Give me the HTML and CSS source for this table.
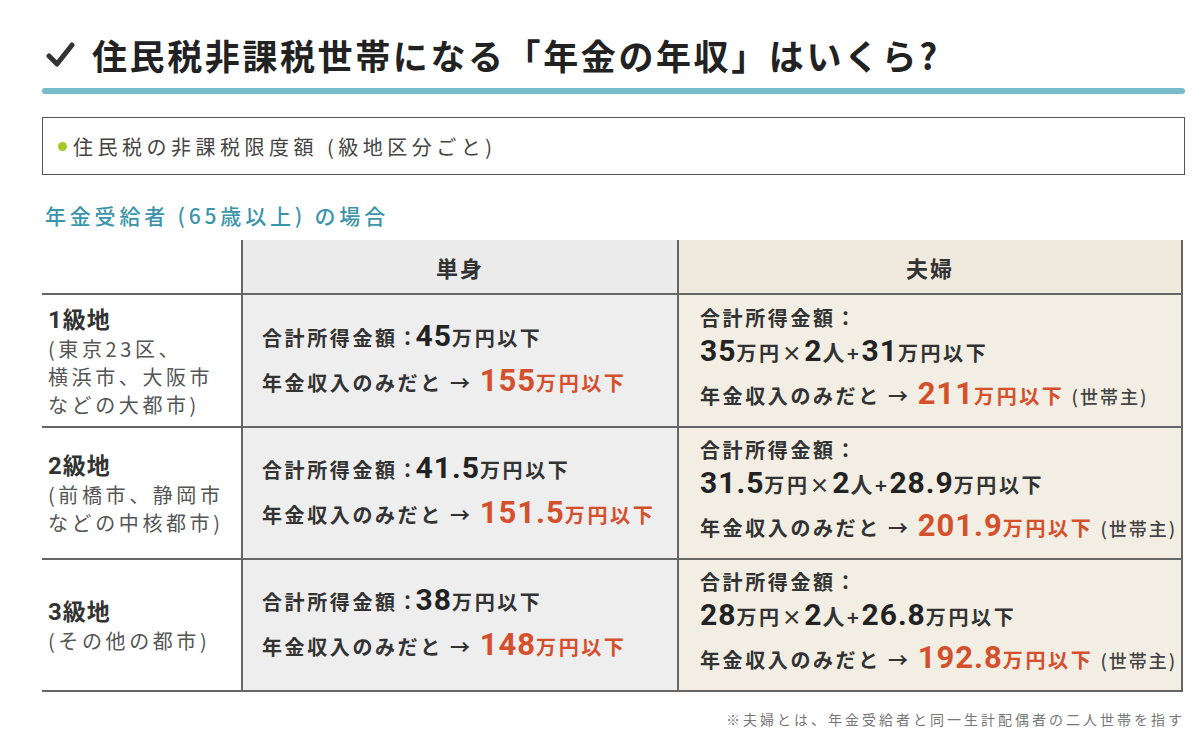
FILE: index.html
```html
<!DOCTYPE html>
<html lang="ja">
<head>
<meta charset="utf-8">
<title>住民税非課税世帯になる「年金の年収」はいくら?</title>
<link rel="stylesheet" href="styles.css">
</head>
<body>
<div class="page">
  <h1 class="title">
    <svg class="check" viewBox="0 0 30 30" width="30" height="30" aria-hidden="true">
      <path d="M4 16 L12 24 L27 5" fill="none" stroke="#333" stroke-width="5" stroke-linecap="round" stroke-linejoin="round"/>
    </svg>
    <span>住民税非課税世帯になる「年金の年収」はいくら?</span>
  </h1>
  <div class="rule"></div>

  <div class="box"><span class="dot"></span><span>住民税の非課税限度額 (級地区分ごと)</span></div>

  <h2 class="sub">年金受給者 (65歳以上) の場合</h2>

  <div class="grid">
    <div class="cell c1 head"></div>
    <div class="cell c2 head">単身</div>
    <div class="cell c3 head">夫婦</div>

    <div class="cell c1 area">
      <div class="rank"><span class="num">1</span>級地</div>
      <div class="cities">(東京23区、</div>
      <div class="cities">横浜市、大阪市</div>
      <div class="cities">などの大都市)</div>
    </div>
    <div class="cell c2 body">
      <div class="l1">合計所得金額<span class="colon">：</span><span class="num big">45</span>万円以下</div>
      <div class="l2">年金収入のみだと → <span class="red"><span class="num rbig">155</span>万円以下</span></div>
    </div>
    <div class="cell c3 body">
      <div class="m1">合計所得金額：</div>
      <div class="m2"><span class="num big">35</span>万円×<span class="num big">2</span><span class="nin">人</span>+<span class="num big">31</span>万円以下</div>
      <div class="m3">年金収入のみだと → <span class="red"><span class="num rbig">211</span>万円以下</span> <span class="hh">(世帯主)</span></div>
    </div>

    <div class="cell c1 area">
      <div class="rank"><span class="num">2</span>級地</div>
      <div class="cities">(前橋市、静岡市</div>
      <div class="cities">などの中核都市)</div>
    </div>
    <div class="cell c2 body">
      <div class="l1">合計所得金額<span class="colon">：</span><span class="num big">41.5</span>万円以下</div>
      <div class="l2">年金収入のみだと → <span class="red"><span class="num rbig">151.5</span>万円以下</span></div>
    </div>
    <div class="cell c3 body">
      <div class="m1">合計所得金額：</div>
      <div class="m2"><span class="num big">31.5</span>万円×<span class="num big">2</span><span class="nin">人</span>+<span class="num big">28.9</span>万円以下</div>
      <div class="m3">年金収入のみだと → <span class="red"><span class="num rbig">201.9</span>万円以下</span> <span class="hh">(世帯主)</span></div>
    </div>

    <div class="cell c1 area">
      <div class="rank"><span class="num">3</span>級地</div>
      <div class="cities">(その他の都市)</div>
    </div>
    <div class="cell c2 body">
      <div class="l1">合計所得金額<span class="colon">：</span><span class="num big">38</span>万円以下</div>
      <div class="l2">年金収入のみだと → <span class="red"><span class="num rbig">148</span>万円以下</span></div>
    </div>
    <div class="cell c3 body">
      <div class="m1">合計所得金額：</div>
      <div class="m2"><span class="num big">28</span>万円×<span class="num big">2</span><span class="nin">人</span>+<span class="num big">26.8</span>万円以下</div>
      <div class="m3">年金収入のみだと → <span class="red"><span class="num rbig">192.8</span>万円以下</span> <span class="hh">(世帯主)</span></div>
    </div>
  </div>

  <p class="note">※夫婦とは、年金受給者と同一生計配偶者の二人世帯を指す</p>
</div>
</body>
</html>
```

FILE: styles.css
```css
* { box-sizing: border-box; }

html, body {
  margin: 0;
  padding: 0;
  background: #ffffff;
}

body {
  font-family: "Noto Sans CJK JP", "Noto Sans", sans-serif;
  color: #333;
}

.page {
  width: 1200px;
  padding: 35px 15px 0 42px;
}

.title {
  display: flex;
  align-items: center;
  gap: 17px;
  margin: 0;
  height: 40px;
  font-size: 35px;
  line-height: 40px;
  font-weight: 700;
  letter-spacing: 2.6px;
  color: #222;
  white-space: nowrap;
}

.check {
  flex: none;
  margin-left: 3px;
}

.rule {
  margin-top: 13px;
  height: 6px;
  border-radius: 3px;
  background: #76bccb;
  width: 1143px;
}

.box {
  margin-top: 23px;
  width: 1143px;
  height: 58px;
  border: 1.5px solid #555;
  display: flex;
  align-items: center;
  padding-left: 15px;
  font-size: 20px;
  letter-spacing: 4.5px;
  color: #444;
}

.dot {
  width: 9px;
  height: 9px;
  border-radius: 50%;
  background: #a7c928;
  margin-right: 6px;
}

.sub {
  margin: 25px 0 0 3px;
  height: 30px;
  line-height: 30px;
  font-size: 21px;
  font-weight: 500;
  letter-spacing: 3.8px;
  color: #3b94aa;
}

.grid {
  margin-top: 10px;
  display: grid;
  grid-template-columns: 201px 436px 504px;
  grid-template-rows: 55px 133px 132px 132px;
}

.cell {
  border-bottom: 2.5px solid #666;
  border-right: 2.5px solid #666;
}

.c1 { background: #ffffff; }
.c2 { background: #eeeeee; }
.c3 { background: #f2eee3; }
.c2.head { background: #ebebeb; }
.c3.head { background: #efeadd; }

.head {
  display: flex;
  align-items: center;
  justify-content: center;
  font-size: 22px;
  font-weight: 700;
  letter-spacing: 2px;
  color: #333;
}

.area {
  display: flex;
  flex-direction: column;
  justify-content: center;
  padding-left: 6px;
  color: #555;
}

.rank {
  font-size: 23px;
  line-height: 30px;
  font-weight: 700;
  letter-spacing: 1px;
  color: #333;
}

.rank .num {
  font-size: 24px;
  font-weight: 700;
}

.cities {
  font-size: 20px;
  line-height: 28px;
  letter-spacing: 3.6px;
}

.num {
  font-family: "Roboto", "Liberation Sans", sans-serif;
  letter-spacing: 1px;
}

.body {
  display: flex;
  flex-direction: column;
  justify-content: center;
  font-size: 20px;
  font-weight: 700;
  letter-spacing: 2.6px;
  color: #333;
  white-space: nowrap;
}

.colon {
  letter-spacing: 0;
  margin-right: -2px;
}

.c2.body { padding-left: 19px; }
.c3.body { padding-left: 21px; }

.l1 { line-height: 40px; }
.l2 { line-height: 46px; }
.m1 { line-height: 30px; }
.m2 { line-height: 36px; }
.m3 { line-height: 46px; }

.big {
  font-size: 30px;
  font-weight: 700;
  color: #222;
}

.nin { font-size: 22px; }

.red { color: #d4502c; font-size: 20px; }

.rbig {
  font-size: 31px;
  font-weight: 700;
}

.hh {
  font-size: 18px;
  font-weight: 500;
  color: #444;
  letter-spacing: 2px;
}

.note {
  margin: 17px 0 0 0;
  width: 1143px;
  text-align: right;
  font-size: 14px;
  letter-spacing: 3px;
  color: #777;
}
```
